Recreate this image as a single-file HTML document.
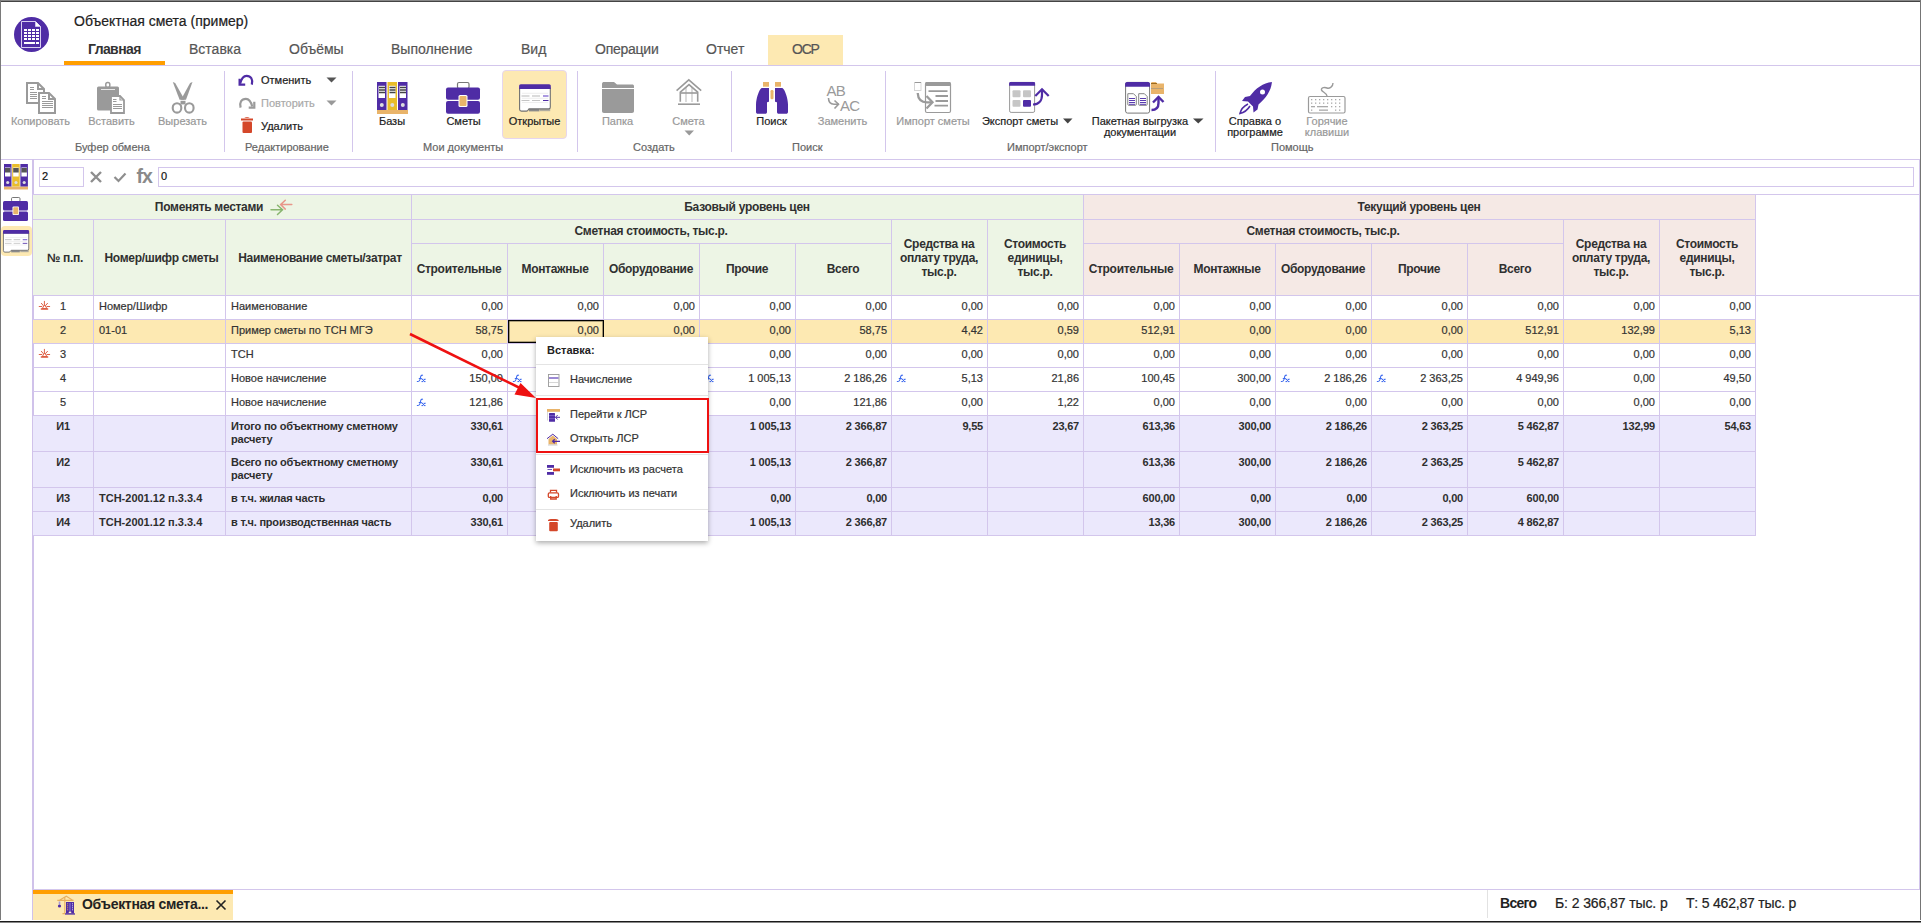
<!DOCTYPE html>
<html><head><meta charset="utf-8">
<style>
*{box-sizing:border-box;margin:0;padding:0}
html,body{width:1921px;height:923px;overflow:hidden;background:#fff}
body{position:relative;font-family:"Liberation Sans",sans-serif;color:#333;-webkit-text-stroke:0.2px currentColor}
.a{position:absolute}
.t{position:absolute;white-space:nowrap;line-height:1}
.hl{position:absolute;height:1px;background:#d3c6ec}
.vl{position:absolute;width:1px;background:#d3c6ec}
.tab{position:absolute;font-size:14px;color:#555;white-space:nowrap;line-height:1;top:42px}
.bl{position:absolute;font-size:11px;color:#222;white-space:nowrap;line-height:11px;text-align:center}
.bl.g{color:#999}
.gl{position:absolute;font-size:11px;color:#666;white-space:nowrap;line-height:1;top:142px}
.sep{position:absolute;width:1px;background:#d3c6ec;top:71px;height:81px}
.hd{position:absolute;font-weight:bold;font-size:12px;color:#303030;text-align:center;line-height:14px;display:flex;align-items:center;justify-content:center}
.c{position:absolute;font-size:11px;color:#333;white-space:nowrap;line-height:24px;height:24px}
.n{text-align:right}
.fx{position:absolute;font-family:"Liberation Serif",serif;font-style:italic;font-size:8px;color:#3a6fd8;font-weight:bold;line-height:1;letter-spacing:-0.5px}
[style*="font-weight:bold"],.hd{-webkit-text-stroke:0}
</style></head><body>
<!-- logo -->
<svg class="a" style="left:14px;top:17px" width="36" height="36" viewBox="0 0 36 36">
<circle cx="17.5" cy="17.5" r="17.5" fill="#4f2ca5"/>
<path d="M7.5 4.5 H21.5 L26.5 9.5 V30.5 H7.5 Z" fill="none" stroke="#d9cff0" stroke-width="1"/>
<path d="M21.5 4.5 V9.5 H26.5" fill="#fff" stroke="#d9cff0" stroke-width="0.8"/>
<path d="M8.5 5.5 H21 V10 H25.5 V29.5 H8.5Z" fill="#4f2ca5"/>
<g fill="#fff">
<rect x="10" y="12" width="3" height="2"/><rect x="14" y="12" width="3" height="2"/><rect x="18" y="12" width="3" height="2"/><rect x="22" y="12" width="3" height="2"/>
<rect x="10" y="15" width="3" height="2"/><rect x="14" y="15" width="3" height="2"/><rect x="18" y="15" width="3" height="2"/><rect x="22" y="15" width="3" height="2"/>
<rect x="10" y="18" width="3" height="2"/><rect x="14" y="18" width="3" height="2"/><rect x="18" y="18" width="3" height="2"/><rect x="22" y="18" width="3" height="2"/>
<rect x="10" y="21" width="3" height="2"/><rect x="14" y="21" width="3" height="2"/><rect x="18" y="21" width="3" height="2"/><rect x="22" y="21" width="3" height="2"/>
<rect x="10" y="25" width="11" height="2"/><rect x="22" y="25" width="3" height="2"/>
</g>
</svg>
<div class="t" style="left:74px;top:14px;font-size:14px;color:#222">Объектная смета (пример)</div>
<!-- tabs -->
<div class="a" style="left:768px;top:35px;width:75px;height:30px;background:#fde9b2"></div>
<div class="tab" style="left:88px;font-weight:bold;color:#333;letter-spacing:-0.6px">Главная</div>
<div class="tab" style="left:189px">Вставка</div>
<div class="tab" style="left:289px">Объёмы</div>
<div class="tab" style="left:391px">Выполнение</div>
<div class="tab" style="left:521px">Вид</div>
<div class="tab" style="left:595px;letter-spacing:-0.25px">Операции</div>
<div class="tab" style="left:706px">Отчет</div>
<div class="tab" style="left:792px;letter-spacing:-1.2px">ОСР</div>
<div class="a" style="left:64px;top:61px;width:101px;height:4px;background:#ff9e00"></div>
<div class="hl" style="left:1px;top:65px;width:1919px"></div>
<div class="hl" style="left:1px;top:159px;width:1919px"></div>
<!-- ribbon separators -->
<div class="sep" style="left:224px"></div>
<div class="sep" style="left:352px"></div>
<div class="sep" style="left:577px"></div>
<div class="sep" style="left:731px"></div>
<div class="sep" style="left:885px"></div>
<div class="sep" style="left:1215px"></div>
<!-- group labels -->
<div class="gl" style="left:75px">Буфер обмена</div>
<div class="gl" style="left:245px">Редактирование</div>
<div class="gl" style="left:423px">Мои документы</div>
<div class="gl" style="left:633px">Создать</div>
<div class="gl" style="left:792px">Поиск</div>
<div class="gl" style="left:1007px">Импорт/экспорт</div>
<div class="gl" style="left:1271px">Помощь</div>
<!-- open docs highlighted -->
<div class="a" style="left:502px;top:70px;width:65px;height:69px;background:#fde9b2;border:1px solid #e6d6ee;border-radius:4px"></div>
<!-- button labels -->
<div class="bl g" style="left:0px;top:116px;width:81px">Копировать</div>
<div class="bl g" style="left:71px;top:116px;width:81px">Вставить</div>
<div class="bl g" style="left:142px;top:116px;width:81px">Вырезать</div>
<div class="bl" style="left:352px;top:116px;width:80px">Базы</div>
<div class="bl" style="left:423px;top:116px;width:81px">Сметы</div>
<div class="bl" style="left:494px;top:116px;width:81px">Открытые</div>
<div class="bl g" style="left:577px;top:116px;width:81px">Папка</div>
<div class="bl g" style="left:648px;top:116px;width:81px">Смета</div>
<div class="bl" style="left:731px;top:116px;width:81px">Поиск</div>
<div class="bl g" style="left:802px;top:116px;width:81px">Заменить</div>
<div class="bl g" style="left:883px;top:116px;width:100px">Импорт сметы</div>
<div class="bl" style="left:975px;top:116px;width:90px">Экспорт сметы</div>
<div class="bl" style="left:1080px;top:116px;width:120px">Пакетная выгрузка<br>документации</div>
<div class="bl" style="left:1205px;top:116px;width:100px">Справка о<br>программе</div>
<div class="bl g" style="left:1277px;top:116px;width:100px">Горячие<br>клавиши</div>
<!-- small dropdown triangles -->
<svg class="a" style="left:684px;top:130px" width="11" height="6"><path d="M0.5 0.5H10L5.25 5.5Z" fill="#999"/></svg>
<svg class="a" style="left:1063px;top:118px" width="10" height="6"><path d="M0 0.5H9.5L4.75 5.5Z" fill="#444"/></svg>
<svg class="a" style="left:1193px;top:118px" width="11" height="6"><path d="M0 0.5H10.5L5.25 5.5Z" fill="#444"/></svg>
<!-- editing group -->
<div class="t" style="left:261px;top:75px;font-size:11px;color:#222">Отменить</div>
<div class="t" style="left:261px;top:98px;font-size:11px;color:#aaa">Повторить</div>
<div class="t" style="left:261px;top:121px;font-size:11px;color:#222">Удалить</div>
<svg class="a" style="left:326px;top:77px" width="11" height="6"><path d="M0.5 0.5H10.5L5.5 5.5Z" fill="#555"/></svg>
<svg class="a" style="left:326px;top:100px" width="11" height="6"><path d="M0.5 0.5H10.5L5.5 5.5Z" fill="#999"/></svg>
<svg class="a" style="left:0;top:0" width="1921" height="923" viewBox="0 0 1921 923">
<!-- copy -->
<path d="M38 103H27V83H38L44 89V92" fill="#fff" stroke="#9a9a9a" stroke-width="2"/>
<path d="M38 83V89H44" fill="none" stroke="#9a9a9a" stroke-width="2"/>
<path d="M39 93H49L55 99V113H39Z" fill="#fff" stroke="#9a9a9a" stroke-width="2"/>
<path d="M49 93V99H55" fill="none" stroke="#9a9a9a" stroke-width="2"/>
<g stroke="#9a9a9a" stroke-width="1">
<path d="M30 87.5H34M30 89.5H34M30 92.5H37M30 94.5H37M30 96.5H37M30 98.5H37"/>
<path d="M42 96.5H46M42 98.5H46M42 101.5H53M42 103.5H53M42 105.5H53M42 107.5H53"/>
</g>
<!-- paste -->
<rect x="97" y="86.5" width="22" height="24" rx="1.5" fill="#9a9a9a"/>
<rect x="105.8" y="82.5" width="4" height="5" rx="1.8" fill="none" stroke="#9a9a9a" stroke-width="1.5"/>
<rect x="101" y="87" width="14" height="3" fill="#9a9a9a"/>
<path d="M101 89.5H115" stroke="#e8e8e8" stroke-width="1"/>
<path d="M111 96H120L124 100V113H111Z" fill="#fff" stroke="#9a9a9a" stroke-width="1.8"/>
<path d="M120 96V100H124" fill="none" stroke="#9a9a9a" stroke-width="1.2"/>
<path d="M113 99.5H116.5M113 101.5H116.5M113 104.5H122M113 106.5H122M113 108.5H122" stroke="#9a9a9a" stroke-width="1"/>
<!-- scissors -->
<path d="M172.8 82L175.2 83L184.6 99.8H179.6Z" fill="#9a9a9a"/>
<path d="M192.5 82L190.1 83L180.9 99.8H186Z" fill="#9a9a9a"/>
<rect x="180.5" y="100.8" width="5" height="3.6" fill="#9a9a9a"/>
<ellipse cx="177" cy="107.9" rx="4.3" ry="4.7" fill="none" stroke="#9a9a9a" stroke-width="2.1"/>
<ellipse cx="189.3" cy="107.9" rx="4.3" ry="4.7" fill="none" stroke="#9a9a9a" stroke-width="2.1"/>
<!-- undo -->
<path d="M251.8 84.6C253.2 79.5 251 75.8 246.5 75.8C243.5 75.8 241.5 78 240.2 83.5" fill="none" stroke="#4f2ca5" stroke-width="2.2"/>
<path d="M239.6 78.8V84.6H245.2" fill="none" stroke="#4f2ca5" stroke-width="2.2"/>
<!-- redo -->
<path d="M240.6 107.6C239.2 102.5 241.4 98.8 245.9 98.8C248.9 98.8 250.9 101 252.2 106.5" fill="none" stroke="#9a9a9a" stroke-width="2.2"/>
<path d="M254.3 101.8V107.6H248.7" fill="none" stroke="#9a9a9a" stroke-width="2.2"/>
<!-- trash -->
<path d="M241 118.5H253V120.5H241Z" fill="#d4472a"/>
<path d="M244.5 118C244.5 117 249.5 117 249.5 118Z" fill="#d4472a"/>
<rect x="242.5" y="121.5" width="9.5" height="11.5" rx="1" fill="#d4472a"/>
<!-- bases -->
<rect x="377" y="110" width="31" height="4" fill="#e9b46a"/>
<rect x="377" y="82" width="9.5" height="28" fill="#4f2ca5"/>
<rect x="387.5" y="82" width="9.5" height="28" fill="#e9bd2a"/>
<rect x="398" y="82" width="9.5" height="28" fill="#4f2ca5"/>
<g fill="#fff"><rect x="378.5" y="85.8" width="6.5" height="12.2"/><rect x="389" y="85.8" width="6.5" height="12.2"/><rect x="399.5" y="85.8" width="6.5" height="12.2"/></g>
<g stroke="#444" stroke-width="1.7"><path d="M379 87.5H385M379 90H385M379 92.5H385M389.5 87.5H395.5M389.5 90H395.5M389.5 92.5H395.5M400 87.5H406M400 90H406M400 92.5H406"/></g>
<g fill="#ddd"><circle cx="381.8" cy="105" r="2"/><circle cx="392.3" cy="105" r="2"/><circle cx="402.8" cy="105" r="2"/></g>
<!-- briefcase -->
<rect x="457.5" y="82.5" width="11.5" height="6" rx="1.5" fill="none" stroke="#777" stroke-width="1.2"/>
<rect x="446" y="87.5" width="34" height="12.3" rx="2" fill="#4f2ca5"/>
<rect x="446" y="101" width="34" height="12.7" rx="2" fill="#4f2ca5"/>
<rect x="458.5" y="95" width="9" height="12" rx="1.5" fill="#fff"/>
<rect x="459.5" y="96" width="7" height="10" rx="1" fill="#e9b46a"/>
<!-- open docs -->
<path d="M529 108.6H539.5V111.4H529Z" fill="#8a8a8a"/>
<path d="M540 108.6H550.2V111.2H540Z" fill="#b0aca0"/>
<path d="M519.6 88V109.3C519.6 110.5 520.3 111.1 521.4 111.1H526.5C527.5 111.1 528 110.5 528.5 109.5L529 108.9H548.6C549.7 108.9 550.3 108.3 550.3 107.2V88Z" fill="#fff" stroke="#707070" stroke-width="1.1"/>
<path d="M519.1 88.9V86C519.1 85 519.8 84.3 520.8 84.3H549.1C550.1 84.3 550.8 85 550.8 86V88.9Z" fill="#4f2ca5"/>
<path d="M522 93.3H548M522 98.3H548M522 102.5H548" stroke="#e6e6e6" stroke-width="0.7"/>
<path d="M521.5 96H529.5M532 96H540" stroke="#cfcfcf" stroke-width="1.5"/>
<path d="M543 96H548.5" stroke="#8f78d6" stroke-width="1.5"/>
<path d="M521.5 100.5H529.5M532 100.5H540" stroke="#bdbdbd" stroke-width="0.9"/>
<path d="M543 100.5H548.5" stroke="#4f2ca5" stroke-width="1"/>
<!-- folder -->
<path d="M602 84C602 82.5 603 82 604 82H614L617 84.5H632C633.5 84.5 634 85 634 86.5V111C634 112.3 633.3 113 632 113H604C602.7 113 602 112.3 602 111Z" fill="#9a9a9a"/>
<path d="M602 88.5H634" stroke="#fff" stroke-width="1"/>
<!-- house -->
<path d="M686 87V102M692 87V102" stroke="#cdcdcd" stroke-width="1.4"/>
<g fill="none" stroke="#9a9a9a" stroke-width="1.6">
<path d="M676.6 90.6L688.8 79.9L701.2 90.6"/>
<path d="M680.3 101.8V92.2L689 84.6L697.7 92.2V101.8"/>
<path d="M680.3 93H697.7"/>
</g>
<path d="M678 104.2H700" stroke="#9a9a9a" stroke-width="1.6"/>
<!-- binoculars -->
<rect x="763" y="82" width="6" height="4.7" fill="#e9b46a"/>
<rect x="775" y="82" width="6" height="4.7" fill="#e9b46a"/>
<path d="M762.3 88H769V101C769 101.6 768.6 102 768 102C767.4 102 767 102.4 767 103V112C767 113 766.3 113.8 765.3 113.8H757.8C756.8 113.8 756 113 756 112V104.5C756.3 98 758.5 92 760.2 89.5C760.6 88.6 761.4 88 762.3 88Z" fill="#4f2ca5"/>
<path d="M781.7 88H775V101C775 101.6 775.4 102 776 102C776.6 102 777 102.4 777 103V112C777 113 777.7 113.8 778.7 113.8H786.2C787.2 113.8 788 113 788 112V104.5C787.7 98 785.5 92 783.8 89.5C783.4 88.6 782.6 88 781.7 88Z" fill="#4f2ca5"/>
<rect x="770.5" y="90" width="3" height="9.3" rx="1.2" fill="#e9b46a"/>
<!-- AB AC -->
<text x="826.5" y="95.9" font-family="Liberation Sans" font-size="15" fill="#9a9a9a" letter-spacing="-0.8">AB</text>
<text x="840" y="110.7" font-family="Liberation Sans" font-size="15" fill="#9a9a9a" letter-spacing="-0.8">AC</text>
<path d="M828.5 98C828.5 102 830.5 104.2 834 104.2H839" fill="none" stroke="#9a9a9a" stroke-width="1.6"/>
<path d="M834.5 100.5L838.5 104.2L834.5 108.5" fill="none" stroke="#9a9a9a" stroke-width="1.6"/>
<!-- import -->
<rect x="914.5" y="82.5" width="6.5" height="8" fill="#fff" stroke="#ccc" stroke-width="0.8"/>
<rect x="915" y="82" width="6" height="1" fill="#999"/>
<rect x="925.5" y="82.5" width="25" height="30" rx="1.5" fill="#fff" stroke="#9a9a9a" stroke-width="1.2"/>
<rect x="925.5" y="82" width="25" height="4" rx="1" fill="#9a9a9a"/>
<path d="M928.5 91.2H947.5M935.5 96H948M935.5 101H948M934.5 105.6H948" stroke="#9a9a9a" stroke-width="1.8"/>
<path d="M917.7 93C918 99 921 102.3 927 102.3H932" fill="none" stroke="#9a9a9a" stroke-width="2.3"/>
<path d="M926.5 96L932.5 102.3L926.5 108.5" fill="none" stroke="#9a9a9a" stroke-width="2.3"/>
<!-- export -->
<rect x="1009.6" y="82.4" width="25" height="30" rx="1.5" fill="#fff" stroke="#999" stroke-width="1"/>
<path d="M1009.1 85.8V83.5C1009.1 82.5 1009.6 82 1010.6 82H1033.8C1034.8 82 1035.1 82.5 1035.1 83.5V85.8Z" fill="#4f2ca5"/>
<g fill="#c6c6c6"><rect x="1012.5" y="90.2" width="8" height="7" rx="1"/><rect x="1023" y="90.2" width="8" height="7" rx="1"/><rect x="1012.5" y="100" width="8" height="6.8" rx="1"/></g>
<rect x="1023" y="100" width="8" height="6.8" rx="1" fill="#4f2ca5"/>
<path d="M1033 104.5C1038.5 104.5 1042 101 1042 95V89" fill="none" stroke="#4f2ca5" stroke-width="2.2"/>
<path d="M1035.3 96L1042 89.2L1048.7 96" fill="none" stroke="#4f2ca5" stroke-width="2.2"/>
<!-- packet -->
<rect x="1125.6" y="82.4" width="24" height="30.7" rx="2" fill="#fff" stroke="#777" stroke-width="1"/>
<path d="M1125.1 86.8V84C1125.1 82.7 1126 82 1127.2 82H1148C1149.2 82 1150 82.7 1150 84V86.8Z" fill="#4f2ca5"/>
<g fill="#fff" stroke="#777" stroke-width="0.9"><path d="M1127.8 93.7H1133.5L1136.3 96.5V104.3C1136.3 105 1136 105.3 1135.3 105.3H1128.8C1128.1 105.3 1127.8 105 1127.8 104.3Z"/><path d="M1138.7 93.7H1144.4L1147.2 96.5V104.3C1147.2 105 1146.9 105.3 1146.2 105.3H1139.7C1139 105.3 1138.7 105 1138.7 104.3Z"/></g>
<g stroke="#5a3cb0" stroke-width="1"><path d="M1129 98.5H1135M1129 100.5H1135M1129 102.5H1135M1129 104.3H1135M1140 98.5H1146M1140 100.5H1146M1140 102.5H1146M1140 104.3H1146"/></g>
<path d="M1151 83.5C1151 82.5 1151.5 82 1152.5 82H1156L1157 83.5H1164V94H1151Z" fill="#e9b46a"/>
<path d="M1151 83.5H1157" stroke="#9b6a20" stroke-width="1"/>
<path d="M1151.5 88.5H1163.5" stroke="#888" stroke-width="1" stroke-dasharray="1 1"/>
<path d="M1151.5 110C1156 110 1158.5 108 1158.5 103V97.5" fill="none" stroke="#4f2ca5" stroke-width="2.4"/>
<path d="M1153 102.5L1158.5 97L1163.5 102" fill="none" stroke="#4f2ca5" stroke-width="2.4"/>
<!-- rocket -->
<path d="M1272 82C1263 83 1256 88 1250 96L1245 97L1242 101L1248 101.5L1253 106.5L1253.5 112.5L1257.5 109.5L1258.5 104.5C1266 98 1271 91 1272 82Z" fill="#4f2ca5"/>
<circle cx="1262.5" cy="92" r="2.5" fill="#fff"/>
<path d="M1248 104C1244 106 1241 109 1240 113.5C1244.5 112.5 1247.5 110 1250 106" fill="none" stroke="#4f2ca5" stroke-width="1.6"/>
<!-- keyboard -->
<rect x="1308.5" y="96.5" width="36.5" height="16.5" rx="1.5" fill="#fff" stroke="#9a9a9a" stroke-width="1.2"/>
<path d="M1327 96C1327 93 1322 92 1321.5 90C1321 87.5 1325 87 1327 88C1329 89 1333 87 1333 83" fill="none" stroke="#9a9a9a" stroke-width="1.4"/>
<g fill="#aaa">
<rect x="1311" y="99" width="1.3" height="1.3"/><rect x="1315" y="99" width="1.3" height="1.3"/><rect x="1319" y="99" width="1.3" height="1.3"/><rect x="1323" y="99" width="1.3" height="1.3"/><rect x="1327" y="99" width="1.3" height="1.3"/><rect x="1331" y="99" width="1.3" height="1.3"/><rect x="1335" y="99" width="1.3" height="1.3"/><rect x="1339" y="99" width="1.3" height="1.3"/>
<rect x="1311" y="102.5" width="1.3" height="1.3"/><rect x="1315" y="102.5" width="1.3" height="1.3"/><rect x="1319" y="102.5" width="1.3" height="1.3"/><rect x="1323" y="102.5" width="1.3" height="1.3"/><rect x="1327" y="102.5" width="1.3" height="1.3"/><rect x="1331" y="102.5" width="1.3" height="1.3"/><rect x="1335" y="102.5" width="1.3" height="1.3"/><rect x="1339" y="102.5" width="1.3" height="1.3"/>
<rect x="1311" y="106" width="4" height="1.3"/><rect x="1317" y="106" width="11" height="1.3"/><rect x="1331" y="106" width="1.3" height="1.3"/><rect x="1335" y="106" width="1.3" height="1.3"/><rect x="1339" y="106" width="1.3" height="1.3"/>
<rect x="1311" y="109.5" width="1.3" height="1.3"/><rect x="1319" y="109.5" width="9" height="1.3"/><rect x="1335" y="109.5" width="1.3" height="1.3"/><rect x="1339" y="109.5" width="1.3" height="1.3"/>
</g>
</svg>
<!-- left sidebar line -->
<div class="a" style="left:32px;top:159px;width:2px;height:761px;background:#d0c2ea"></div>
<div class="hl" style="left:32px;top:194px;width:1888px"></div>
<!-- formula inputs -->
<div class="a" style="left:39px;top:167px;width:45px;height:20px;border:1px solid #d3c6ec"></div>
<div class="t" style="left:42px;top:171px;font-size:11px;color:#111">2</div>
<div class="a" style="left:158px;top:167px;width:1756px;height:20px;border:1px solid #d3c6ec"></div>
<div class="t" style="left:161px;top:171px;font-size:11px;color:#111">0</div>
<svg class="a" style="left:0;top:0" width="200" height="260">
<path d="M91 172L101 182M101 172L91 182" stroke="#8e8e8e" stroke-width="2.4"/>
<path d="M114.5 177L118.5 181L125.5 173.5" fill="none" stroke="#8e8e8e" stroke-width="2.2"/>
<!-- sidebar bases -->
<rect x="4" y="186.5" width="24" height="3" fill="#e9b46a"/>
<rect x="4" y="164" width="7.5" height="22.5" fill="#4f2ca5"/>
<rect x="12.2" y="164" width="7.5" height="22.5" fill="#e9bd2a"/>
<rect x="20.4" y="164" width="7.5" height="22.5" fill="#4f2ca5"/>
<g fill="#fff"><rect x="5" y="167.5" width="5.5" height="9"/><rect x="13.2" y="167.5" width="5.5" height="9"/><rect x="21.4" y="167.5" width="5.5" height="9"/></g>
<g fill="#555"><rect x="5" y="168" width="5.5" height="4.5"/><rect x="13.2" y="168" width="5.5" height="4.5"/><rect x="21.4" y="168" width="5.5" height="4.5"/></g>
<g fill="#ddd"><circle cx="7.7" cy="182.5" r="1.6"/><circle cx="16" cy="182.5" r="1.6"/><circle cx="24.2" cy="182.5" r="1.6"/></g>
<!-- sidebar briefcase -->
<rect x="11.5" y="197.5" width="8.5" height="4" rx="1.2" fill="none" stroke="#777" stroke-width="1"/>
<rect x="3" y="201" width="25" height="9.6" rx="1.5" fill="#4f2ca5"/>
<rect x="3" y="211.4" width="25" height="9.6" rx="1.5" fill="#4f2ca5"/>
<rect x="12.5" y="206.5" width="6.5" height="8.5" rx="1" fill="#fff"/>
<rect x="13.3" y="207.3" width="5" height="7" rx="0.8" fill="#e9b46a"/>
</svg>
<div class="a" style="left:1px;top:226px;width:31px;height:30px;background:#fde9b2;border-radius:4px"></div>
<svg class="a" style="left:0;top:0" width="40" height="260"><g transform="translate(3,230) scale(0.825) translate(-519.1,-84.3)">
<path d="M529 108.6H539.5V111.4H529Z" fill="#8a8a8a"/>
<path d="M540 108.6H550.2V111.2H540Z" fill="#b0aca0"/>
<path d="M519.6 88V109.3C519.6 110.5 520.3 111.1 521.4 111.1H526.5C527.5 111.1 528 110.5 528.5 109.5L529 108.9H548.6C549.7 108.9 550.3 108.3 550.3 107.2V88Z" fill="#fff" stroke="#707070" stroke-width="1.1"/>
<path d="M519.1 88.9V86C519.1 85 519.8 84.3 520.8 84.3H549.1C550.1 84.3 550.8 85 550.8 86V88.9Z" fill="#4f2ca5"/>
<path d="M522 93.3H548M522 98.3H548M522 102.5H548" stroke="#e6e6e6" stroke-width="0.7"/>
<path d="M521.5 96H529.5M532 96H540" stroke="#cfcfcf" stroke-width="1.5"/>
<path d="M543 96H548.5" stroke="#8f78d6" stroke-width="1.5"/>
<path d="M521.5 100.5H529.5M532 100.5H540" stroke="#bdbdbd" stroke-width="0.9"/>
<path d="M543 100.5H548.5" stroke="#4f2ca5" stroke-width="1"/>
</g></svg>
<div class="t" style="left:136.5px;top:166.5px;font-size:19.5px;font-weight:bold;color:#8a8a8a;letter-spacing:-1px">fx</div>
<div class="a" style="left:33px;top:195px;width:1050px;height:100px;background:#edf5e5"></div>
<div class="a" style="left:1083px;top:195px;width:672px;height:100px;background:#f5e9e5"></div>
<div class="a" style="left:33px;top:320px;width:1722px;height:23px;background:#fde9b2"></div>
<div class="a" style="left:33px;top:416px;width:1722px;height:35px;background:#ebe8fc"></div>
<div class="a" style="left:33px;top:452px;width:1722px;height:35px;background:#ebe8fc"></div>
<div class="a" style="left:33px;top:488px;width:1722px;height:23px;background:#ebe8fc"></div>
<div class="a" style="left:33px;top:512px;width:1722px;height:23px;background:#ebe8fc"></div>
<div class="hl" style="left:33px;top:219px;width:1723px"></div>
<div class="hl" style="left:411px;top:243px;width:481px"></div>
<div class="hl" style="left:1083px;top:243px;width:481px"></div>
<div class="hl" style="left:33px;top:295px;width:1887px"></div>
<div class="hl" style="left:33px;top:319px;width:1723px"></div>
<div class="hl" style="left:33px;top:343px;width:1723px"></div>
<div class="hl" style="left:33px;top:367px;width:1723px"></div>
<div class="hl" style="left:33px;top:391px;width:1723px"></div>
<div class="hl" style="left:33px;top:415px;width:1723px"></div>
<div class="hl" style="left:33px;top:451px;width:1723px"></div>
<div class="hl" style="left:33px;top:487px;width:1723px"></div>
<div class="hl" style="left:33px;top:511px;width:1723px"></div>
<div class="hl" style="left:33px;top:535px;width:1723px"></div>
<div class="vl" style="left:411px;top:195px;height:25px"></div>
<div class="vl" style="left:1083px;top:195px;height:25px"></div>
<div class="vl" style="left:1755px;top:195px;height:25px"></div>
<div class="vl" style="left:93px;top:219px;height:77px"></div>
<div class="vl" style="left:225px;top:219px;height:77px"></div>
<div class="vl" style="left:411px;top:219px;height:77px"></div>
<div class="vl" style="left:891px;top:219px;height:77px"></div>
<div class="vl" style="left:987px;top:219px;height:77px"></div>
<div class="vl" style="left:1083px;top:219px;height:77px"></div>
<div class="vl" style="left:1563px;top:219px;height:77px"></div>
<div class="vl" style="left:1659px;top:219px;height:77px"></div>
<div class="vl" style="left:1755px;top:219px;height:77px"></div>
<div class="vl" style="left:507px;top:243px;height:53px"></div>
<div class="vl" style="left:603px;top:243px;height:53px"></div>
<div class="vl" style="left:699px;top:243px;height:53px"></div>
<div class="vl" style="left:795px;top:243px;height:53px"></div>
<div class="vl" style="left:1179px;top:243px;height:53px"></div>
<div class="vl" style="left:1275px;top:243px;height:53px"></div>
<div class="vl" style="left:1371px;top:243px;height:53px"></div>
<div class="vl" style="left:1467px;top:243px;height:53px"></div>
<div class="vl" style="left:93px;top:295px;height:241px"></div>
<div class="vl" style="left:225px;top:295px;height:241px"></div>
<div class="vl" style="left:411px;top:295px;height:241px"></div>
<div class="vl" style="left:507px;top:295px;height:241px"></div>
<div class="vl" style="left:603px;top:295px;height:241px"></div>
<div class="vl" style="left:699px;top:295px;height:241px"></div>
<div class="vl" style="left:795px;top:295px;height:241px"></div>
<div class="vl" style="left:891px;top:295px;height:241px"></div>
<div class="vl" style="left:987px;top:295px;height:241px"></div>
<div class="vl" style="left:1083px;top:295px;height:241px"></div>
<div class="vl" style="left:1179px;top:295px;height:241px"></div>
<div class="vl" style="left:1275px;top:295px;height:241px"></div>
<div class="vl" style="left:1371px;top:295px;height:241px"></div>
<div class="vl" style="left:1467px;top:295px;height:241px"></div>
<div class="vl" style="left:1563px;top:295px;height:241px"></div>
<div class="vl" style="left:1659px;top:295px;height:241px"></div>
<div class="vl" style="left:1755px;top:295px;height:241px"></div>
<div class="hd" style="left:33px;top:195px;width:378px;height:24px;letter-spacing:-0.3px;">Поменять местами<span style="display:inline-block;width:26px"></span></div>
<svg class="a" style="left:262px;top:196px" width="38" height="22"><g fill="none" stroke-width="1.5" stroke-linecap="round"><path d="M9 13.8H20.5M15.5 9.3L20.5 13.8L15.5 18.5" stroke="#88b56e"/><path d="M29.8 8.6H18.6M23.3 4.2L18.6 8.6L23.3 13.1" stroke="#e8978a"/></g></svg>
<div class="hd" style="left:411px;top:195px;width:672px;height:24px;letter-spacing:-0.3px;">Базовый уровень цен</div>
<div class="hd" style="left:1083px;top:195px;width:672px;height:24px;letter-spacing:-0.3px;">Текущий уровень цен</div>
<div class="hd" style="left:33px;top:220px;width:60px;height:76px;letter-spacing:-0.3px;padding-left:4px">№ п.п.</div>
<div class="hd" style="left:93px;top:220px;width:132px;height:76px;letter-spacing:-0.3px;padding-left:5px">Номер/шифр сметы</div>
<div class="hd" style="left:225px;top:220px;width:186px;height:76px;letter-spacing:-0.3px;padding-left:4px">Наименование сметы/затрат</div>
<div class="hd" style="left:411px;top:219px;width:480px;height:24px;letter-spacing:-0.3px;">Сметная стоимость, тыс.р.</div>
<div class="hd" style="left:411px;top:243px;width:96px;height:52px;letter-spacing:-0.3px;">Строительные</div>
<div class="hd" style="left:507px;top:243px;width:96px;height:52px;letter-spacing:-0.3px;">Монтажные</div>
<div class="hd" style="left:603px;top:243px;width:96px;height:52px;letter-spacing:-0.3px;">Оборудование</div>
<div class="hd" style="left:699px;top:243px;width:96px;height:52px;letter-spacing:-0.3px;">Прочие</div>
<div class="hd" style="left:795px;top:243px;width:96px;height:52px;letter-spacing:-0.3px;">Всего</div>
<div class="hd" style="left:891px;top:220px;width:96px;height:76px;letter-spacing:-0.3px;">Средства на<br>оплату труда,<br>тыс.р.</div>
<div class="hd" style="left:987px;top:220px;width:96px;height:76px;letter-spacing:-0.3px;">Стоимость<br>единицы,<br>тыс.р.</div>
<div class="hd" style="left:1083px;top:219px;width:480px;height:24px;letter-spacing:-0.3px;">Сметная стоимость, тыс.р.</div>
<div class="hd" style="left:1083px;top:243px;width:96px;height:52px;letter-spacing:-0.3px;">Строительные</div>
<div class="hd" style="left:1179px;top:243px;width:96px;height:52px;letter-spacing:-0.3px;">Монтажные</div>
<div class="hd" style="left:1275px;top:243px;width:96px;height:52px;letter-spacing:-0.3px;">Оборудование</div>
<div class="hd" style="left:1371px;top:243px;width:96px;height:52px;letter-spacing:-0.3px;">Прочие</div>
<div class="hd" style="left:1467px;top:243px;width:96px;height:52px;letter-spacing:-0.3px;">Всего</div>
<div class="hd" style="left:1563px;top:220px;width:96px;height:76px;letter-spacing:-0.3px;">Средства на<br>оплату труда,<br>тыс.р.</div>
<div class="hd" style="left:1659px;top:220px;width:96px;height:76px;letter-spacing:-0.3px;">Стоимость<br>единицы,<br>тыс.р.</div>
<div class="t" style="left:33px;top:301px;width:60px;text-align:center;font-size:11px;">1</div>
<svg class="a" style="left:38px;top:296px" width="14" height="16" viewBox="0 0 14 16"><g stroke="#dc5a3e" stroke-width="0.95" fill="none" stroke-linecap="round"><path d="M6.4 5.3V9M3.4 7.3L5.2 9.5M9.5 7.3L7.6 9.5M1.2 10.5H3.8M11.7 10.5H9"/><path d="M6.4 9.2L4.2 12.6H8.6Z"/><path d="M3.3 13H9.7" stroke-width="1.3"/></g></svg>
<div class="t" style="left:99px;top:301px;font-size:11px;;letter-spacing:0">Номер/Шифр</div>
<div class="t" style="left:231px;top:300px;font-size:11px;line-height:13px;">Наименование</div>
<div class="t" style="left:411px;top:301px;width:92px;text-align:right;font-size:11px;">0,00</div>
<div class="t" style="left:507px;top:301px;width:92px;text-align:right;font-size:11px;">0,00</div>
<div class="t" style="left:603px;top:301px;width:92px;text-align:right;font-size:11px;">0,00</div>
<div class="t" style="left:699px;top:301px;width:92px;text-align:right;font-size:11px;">0,00</div>
<div class="t" style="left:795px;top:301px;width:92px;text-align:right;font-size:11px;">0,00</div>
<div class="t" style="left:891px;top:301px;width:92px;text-align:right;font-size:11px;">0,00</div>
<div class="t" style="left:987px;top:301px;width:92px;text-align:right;font-size:11px;">0,00</div>
<div class="t" style="left:1083px;top:301px;width:92px;text-align:right;font-size:11px;">0,00</div>
<div class="t" style="left:1179px;top:301px;width:92px;text-align:right;font-size:11px;">0,00</div>
<div class="t" style="left:1275px;top:301px;width:92px;text-align:right;font-size:11px;">0,00</div>
<div class="t" style="left:1371px;top:301px;width:92px;text-align:right;font-size:11px;">0,00</div>
<div class="t" style="left:1467px;top:301px;width:92px;text-align:right;font-size:11px;">0,00</div>
<div class="t" style="left:1563px;top:301px;width:92px;text-align:right;font-size:11px;">0,00</div>
<div class="t" style="left:1659px;top:301px;width:92px;text-align:right;font-size:11px;">0,00</div>
<div class="t" style="left:33px;top:325px;width:60px;text-align:center;font-size:11px;">2</div>
<div class="t" style="left:99px;top:325px;font-size:11px;;letter-spacing:0">01-01</div>
<div class="t" style="left:231px;top:324px;font-size:11px;line-height:13px;">Пример сметы по ТСН МГЭ</div>
<div class="t" style="left:411px;top:325px;width:92px;text-align:right;font-size:11px;">58,75</div>
<div class="t" style="left:507px;top:325px;width:92px;text-align:right;font-size:11px;">0,00</div>
<div class="t" style="left:603px;top:325px;width:92px;text-align:right;font-size:11px;">0,00</div>
<div class="t" style="left:699px;top:325px;width:92px;text-align:right;font-size:11px;">0,00</div>
<div class="t" style="left:795px;top:325px;width:92px;text-align:right;font-size:11px;">58,75</div>
<div class="t" style="left:891px;top:325px;width:92px;text-align:right;font-size:11px;">4,42</div>
<div class="t" style="left:987px;top:325px;width:92px;text-align:right;font-size:11px;">0,59</div>
<div class="t" style="left:1083px;top:325px;width:92px;text-align:right;font-size:11px;">512,91</div>
<div class="t" style="left:1179px;top:325px;width:92px;text-align:right;font-size:11px;">0,00</div>
<div class="t" style="left:1275px;top:325px;width:92px;text-align:right;font-size:11px;">0,00</div>
<div class="t" style="left:1371px;top:325px;width:92px;text-align:right;font-size:11px;">0,00</div>
<div class="t" style="left:1467px;top:325px;width:92px;text-align:right;font-size:11px;">512,91</div>
<div class="t" style="left:1563px;top:325px;width:92px;text-align:right;font-size:11px;">132,99</div>
<div class="t" style="left:1659px;top:325px;width:92px;text-align:right;font-size:11px;">5,13</div>
<div class="t" style="left:33px;top:349px;width:60px;text-align:center;font-size:11px;">3</div>
<svg class="a" style="left:38px;top:344px" width="14" height="16" viewBox="0 0 14 16"><g stroke="#dc5a3e" stroke-width="0.95" fill="none" stroke-linecap="round"><path d="M6.4 5.3V9M3.4 7.3L5.2 9.5M9.5 7.3L7.6 9.5M1.2 10.5H3.8M11.7 10.5H9"/><path d="M6.4 9.2L4.2 12.6H8.6Z"/><path d="M3.3 13H9.7" stroke-width="1.3"/></g></svg>
<div class="t" style="left:231px;top:348px;font-size:11px;line-height:13px;">ТСН</div>
<div class="t" style="left:411px;top:349px;width:92px;text-align:right;font-size:11px;">0,00</div>
<div class="t" style="left:507px;top:349px;width:92px;text-align:right;font-size:11px;">0,00</div>
<div class="t" style="left:603px;top:349px;width:92px;text-align:right;font-size:11px;">0,00</div>
<div class="t" style="left:699px;top:349px;width:92px;text-align:right;font-size:11px;">0,00</div>
<div class="t" style="left:795px;top:349px;width:92px;text-align:right;font-size:11px;">0,00</div>
<div class="t" style="left:891px;top:349px;width:92px;text-align:right;font-size:11px;">0,00</div>
<div class="t" style="left:987px;top:349px;width:92px;text-align:right;font-size:11px;">0,00</div>
<div class="t" style="left:1083px;top:349px;width:92px;text-align:right;font-size:11px;">0,00</div>
<div class="t" style="left:1179px;top:349px;width:92px;text-align:right;font-size:11px;">0,00</div>
<div class="t" style="left:1275px;top:349px;width:92px;text-align:right;font-size:11px;">0,00</div>
<div class="t" style="left:1371px;top:349px;width:92px;text-align:right;font-size:11px;">0,00</div>
<div class="t" style="left:1467px;top:349px;width:92px;text-align:right;font-size:11px;">0,00</div>
<div class="t" style="left:1563px;top:349px;width:92px;text-align:right;font-size:11px;">0,00</div>
<div class="t" style="left:1659px;top:349px;width:92px;text-align:right;font-size:11px;">0,00</div>
<div class="t" style="left:33px;top:373px;width:60px;text-align:center;font-size:11px;">4</div>
<div class="t" style="left:231px;top:372px;font-size:11px;line-height:13px;">Новое начисление</div>
<svg class="a" style="left:416px;top:374px" width="11" height="9" viewBox="0 0 11 9"><g fill="none" stroke="#3b68ee" stroke-width="1.1" stroke-linecap="round"><path d="M1.3 7.5C3 7.8 3.6 7.3 4 5.5L4.6 2.8C4.9 1.5 5.4 1 6.6 1.2M3.2 4.5H5.4"/><path d="M6.4 5.3L8.6 7.6M8.8 5.3L6.3 7.6M6 5.3H7M8.3 5.3H9.3M5.8 7.6H6.8M8.2 7.6H9.2" stroke-width="0.9"/></g></svg>
<div class="t" style="left:411px;top:373px;width:92px;text-align:right;font-size:11px;">150,00</div>
<svg class="a" style="left:512px;top:374px" width="11" height="9" viewBox="0 0 11 9"><g fill="none" stroke="#3b68ee" stroke-width="1.1" stroke-linecap="round"><path d="M1.3 7.5C3 7.8 3.6 7.3 4 5.5L4.6 2.8C4.9 1.5 5.4 1 6.6 1.2M3.2 4.5H5.4"/><path d="M6.4 5.3L8.6 7.6M8.8 5.3L6.3 7.6M6 5.3H7M8.3 5.3H9.3M5.8 7.6H6.8M8.2 7.6H9.2" stroke-width="0.9"/></g></svg>
<div class="t" style="left:507px;top:373px;width:92px;text-align:right;font-size:11px;">150,00</div>
<div class="t" style="left:603px;top:373px;width:92px;text-align:right;font-size:11px;">0,00</div>
<svg class="a" style="left:704px;top:374px" width="11" height="9" viewBox="0 0 11 9"><g fill="none" stroke="#3b68ee" stroke-width="1.1" stroke-linecap="round"><path d="M1.3 7.5C3 7.8 3.6 7.3 4 5.5L4.6 2.8C4.9 1.5 5.4 1 6.6 1.2M3.2 4.5H5.4"/><path d="M6.4 5.3L8.6 7.6M8.8 5.3L6.3 7.6M6 5.3H7M8.3 5.3H9.3M5.8 7.6H6.8M8.2 7.6H9.2" stroke-width="0.9"/></g></svg>
<div class="t" style="left:699px;top:373px;width:92px;text-align:right;font-size:11px;">1 005,13</div>
<div class="t" style="left:795px;top:373px;width:92px;text-align:right;font-size:11px;">2 186,26</div>
<svg class="a" style="left:896px;top:374px" width="11" height="9" viewBox="0 0 11 9"><g fill="none" stroke="#3b68ee" stroke-width="1.1" stroke-linecap="round"><path d="M1.3 7.5C3 7.8 3.6 7.3 4 5.5L4.6 2.8C4.9 1.5 5.4 1 6.6 1.2M3.2 4.5H5.4"/><path d="M6.4 5.3L8.6 7.6M8.8 5.3L6.3 7.6M6 5.3H7M8.3 5.3H9.3M5.8 7.6H6.8M8.2 7.6H9.2" stroke-width="0.9"/></g></svg>
<div class="t" style="left:891px;top:373px;width:92px;text-align:right;font-size:11px;">5,13</div>
<div class="t" style="left:987px;top:373px;width:92px;text-align:right;font-size:11px;">21,86</div>
<div class="t" style="left:1083px;top:373px;width:92px;text-align:right;font-size:11px;">100,45</div>
<div class="t" style="left:1179px;top:373px;width:92px;text-align:right;font-size:11px;">300,00</div>
<svg class="a" style="left:1280px;top:374px" width="11" height="9" viewBox="0 0 11 9"><g fill="none" stroke="#3b68ee" stroke-width="1.1" stroke-linecap="round"><path d="M1.3 7.5C3 7.8 3.6 7.3 4 5.5L4.6 2.8C4.9 1.5 5.4 1 6.6 1.2M3.2 4.5H5.4"/><path d="M6.4 5.3L8.6 7.6M8.8 5.3L6.3 7.6M6 5.3H7M8.3 5.3H9.3M5.8 7.6H6.8M8.2 7.6H9.2" stroke-width="0.9"/></g></svg>
<div class="t" style="left:1275px;top:373px;width:92px;text-align:right;font-size:11px;">2 186,26</div>
<svg class="a" style="left:1376px;top:374px" width="11" height="9" viewBox="0 0 11 9"><g fill="none" stroke="#3b68ee" stroke-width="1.1" stroke-linecap="round"><path d="M1.3 7.5C3 7.8 3.6 7.3 4 5.5L4.6 2.8C4.9 1.5 5.4 1 6.6 1.2M3.2 4.5H5.4"/><path d="M6.4 5.3L8.6 7.6M8.8 5.3L6.3 7.6M6 5.3H7M8.3 5.3H9.3M5.8 7.6H6.8M8.2 7.6H9.2" stroke-width="0.9"/></g></svg>
<div class="t" style="left:1371px;top:373px;width:92px;text-align:right;font-size:11px;">2 363,25</div>
<div class="t" style="left:1467px;top:373px;width:92px;text-align:right;font-size:11px;">4 949,96</div>
<div class="t" style="left:1563px;top:373px;width:92px;text-align:right;font-size:11px;">0,00</div>
<div class="t" style="left:1659px;top:373px;width:92px;text-align:right;font-size:11px;">49,50</div>
<div class="t" style="left:33px;top:397px;width:60px;text-align:center;font-size:11px;">5</div>
<div class="t" style="left:231px;top:396px;font-size:11px;line-height:13px;">Новое начисление</div>
<svg class="a" style="left:416px;top:398px" width="11" height="9" viewBox="0 0 11 9"><g fill="none" stroke="#3b68ee" stroke-width="1.1" stroke-linecap="round"><path d="M1.3 7.5C3 7.8 3.6 7.3 4 5.5L4.6 2.8C4.9 1.5 5.4 1 6.6 1.2M3.2 4.5H5.4"/><path d="M6.4 5.3L8.6 7.6M8.8 5.3L6.3 7.6M6 5.3H7M8.3 5.3H9.3M5.8 7.6H6.8M8.2 7.6H9.2" stroke-width="0.9"/></g></svg>
<div class="t" style="left:411px;top:397px;width:92px;text-align:right;font-size:11px;">121,86</div>
<div class="t" style="left:507px;top:397px;width:92px;text-align:right;font-size:11px;">0,00</div>
<div class="t" style="left:603px;top:397px;width:92px;text-align:right;font-size:11px;">0,00</div>
<div class="t" style="left:699px;top:397px;width:92px;text-align:right;font-size:11px;">0,00</div>
<div class="t" style="left:795px;top:397px;width:92px;text-align:right;font-size:11px;">121,86</div>
<div class="t" style="left:891px;top:397px;width:92px;text-align:right;font-size:11px;">0,00</div>
<div class="t" style="left:987px;top:397px;width:92px;text-align:right;font-size:11px;">1,22</div>
<div class="t" style="left:1083px;top:397px;width:92px;text-align:right;font-size:11px;">0,00</div>
<div class="t" style="left:1179px;top:397px;width:92px;text-align:right;font-size:11px;">0,00</div>
<div class="t" style="left:1275px;top:397px;width:92px;text-align:right;font-size:11px;">0,00</div>
<div class="t" style="left:1371px;top:397px;width:92px;text-align:right;font-size:11px;">0,00</div>
<div class="t" style="left:1467px;top:397px;width:92px;text-align:right;font-size:11px;">0,00</div>
<div class="t" style="left:1563px;top:397px;width:92px;text-align:right;font-size:11px;">0,00</div>
<div class="t" style="left:1659px;top:397px;width:92px;text-align:right;font-size:11px;">0,00</div>
<div class="t" style="left:33px;top:421px;width:60px;text-align:center;font-size:11px;font-weight:bold;color:#2e2e2e;letter-spacing:-0.2px;">И1</div>
<div class="t" style="left:231px;top:420px;font-size:11px;line-height:13px;font-weight:bold;color:#2e2e2e;letter-spacing:-0.2px;">Итого по объектному сметному<br>расчету</div>
<div class="t" style="left:411px;top:421px;width:92px;text-align:right;font-size:11px;font-weight:bold;color:#2e2e2e;letter-spacing:-0.2px;">330,61</div>
<div class="t" style="left:507px;top:421px;width:92px;text-align:right;font-size:11px;font-weight:bold;color:#2e2e2e;letter-spacing:-0.2px;">0,00</div>
<div class="t" style="left:603px;top:421px;width:92px;text-align:right;font-size:11px;font-weight:bold;color:#2e2e2e;letter-spacing:-0.2px;">0,00</div>
<div class="t" style="left:699px;top:421px;width:92px;text-align:right;font-size:11px;font-weight:bold;color:#2e2e2e;letter-spacing:-0.2px;">1 005,13</div>
<div class="t" style="left:795px;top:421px;width:92px;text-align:right;font-size:11px;font-weight:bold;color:#2e2e2e;letter-spacing:-0.2px;">2 366,87</div>
<div class="t" style="left:891px;top:421px;width:92px;text-align:right;font-size:11px;font-weight:bold;color:#2e2e2e;letter-spacing:-0.2px;">9,55</div>
<div class="t" style="left:987px;top:421px;width:92px;text-align:right;font-size:11px;font-weight:bold;color:#2e2e2e;letter-spacing:-0.2px;">23,67</div>
<div class="t" style="left:1083px;top:421px;width:92px;text-align:right;font-size:11px;font-weight:bold;color:#2e2e2e;letter-spacing:-0.2px;">613,36</div>
<div class="t" style="left:1179px;top:421px;width:92px;text-align:right;font-size:11px;font-weight:bold;color:#2e2e2e;letter-spacing:-0.2px;">300,00</div>
<div class="t" style="left:1275px;top:421px;width:92px;text-align:right;font-size:11px;font-weight:bold;color:#2e2e2e;letter-spacing:-0.2px;">2 186,26</div>
<div class="t" style="left:1371px;top:421px;width:92px;text-align:right;font-size:11px;font-weight:bold;color:#2e2e2e;letter-spacing:-0.2px;">2 363,25</div>
<div class="t" style="left:1467px;top:421px;width:92px;text-align:right;font-size:11px;font-weight:bold;color:#2e2e2e;letter-spacing:-0.2px;">5 462,87</div>
<div class="t" style="left:1563px;top:421px;width:92px;text-align:right;font-size:11px;font-weight:bold;color:#2e2e2e;letter-spacing:-0.2px;">132,99</div>
<div class="t" style="left:1659px;top:421px;width:92px;text-align:right;font-size:11px;font-weight:bold;color:#2e2e2e;letter-spacing:-0.2px;">54,63</div>
<div class="t" style="left:33px;top:457px;width:60px;text-align:center;font-size:11px;font-weight:bold;color:#2e2e2e;letter-spacing:-0.2px;">И2</div>
<div class="t" style="left:231px;top:456px;font-size:11px;line-height:13px;font-weight:bold;color:#2e2e2e;letter-spacing:-0.2px;">Всего по объектному сметному<br>расчету</div>
<div class="t" style="left:411px;top:457px;width:92px;text-align:right;font-size:11px;font-weight:bold;color:#2e2e2e;letter-spacing:-0.2px;">330,61</div>
<div class="t" style="left:507px;top:457px;width:92px;text-align:right;font-size:11px;font-weight:bold;color:#2e2e2e;letter-spacing:-0.2px;">0,00</div>
<div class="t" style="left:603px;top:457px;width:92px;text-align:right;font-size:11px;font-weight:bold;color:#2e2e2e;letter-spacing:-0.2px;">0,00</div>
<div class="t" style="left:699px;top:457px;width:92px;text-align:right;font-size:11px;font-weight:bold;color:#2e2e2e;letter-spacing:-0.2px;">1 005,13</div>
<div class="t" style="left:795px;top:457px;width:92px;text-align:right;font-size:11px;font-weight:bold;color:#2e2e2e;letter-spacing:-0.2px;">2 366,87</div>
<div class="t" style="left:1083px;top:457px;width:92px;text-align:right;font-size:11px;font-weight:bold;color:#2e2e2e;letter-spacing:-0.2px;">613,36</div>
<div class="t" style="left:1179px;top:457px;width:92px;text-align:right;font-size:11px;font-weight:bold;color:#2e2e2e;letter-spacing:-0.2px;">300,00</div>
<div class="t" style="left:1275px;top:457px;width:92px;text-align:right;font-size:11px;font-weight:bold;color:#2e2e2e;letter-spacing:-0.2px;">2 186,26</div>
<div class="t" style="left:1371px;top:457px;width:92px;text-align:right;font-size:11px;font-weight:bold;color:#2e2e2e;letter-spacing:-0.2px;">2 363,25</div>
<div class="t" style="left:1467px;top:457px;width:92px;text-align:right;font-size:11px;font-weight:bold;color:#2e2e2e;letter-spacing:-0.2px;">5 462,87</div>
<div class="t" style="left:33px;top:493px;width:60px;text-align:center;font-size:11px;font-weight:bold;color:#2e2e2e;letter-spacing:-0.2px;">И3</div>
<div class="t" style="left:99px;top:493px;font-size:11px;font-weight:bold;color:#2e2e2e;letter-spacing:-0.2px;;letter-spacing:0">ТСН-2001.12 п.3.3.4</div>
<div class="t" style="left:231px;top:492px;font-size:11px;line-height:13px;font-weight:bold;color:#2e2e2e;letter-spacing:-0.2px;">в т.ч. жилая часть</div>
<div class="t" style="left:411px;top:493px;width:92px;text-align:right;font-size:11px;font-weight:bold;color:#2e2e2e;letter-spacing:-0.2px;">0,00</div>
<div class="t" style="left:507px;top:493px;width:92px;text-align:right;font-size:11px;font-weight:bold;color:#2e2e2e;letter-spacing:-0.2px;">0,00</div>
<div class="t" style="left:603px;top:493px;width:92px;text-align:right;font-size:11px;font-weight:bold;color:#2e2e2e;letter-spacing:-0.2px;">0,00</div>
<div class="t" style="left:699px;top:493px;width:92px;text-align:right;font-size:11px;font-weight:bold;color:#2e2e2e;letter-spacing:-0.2px;">0,00</div>
<div class="t" style="left:795px;top:493px;width:92px;text-align:right;font-size:11px;font-weight:bold;color:#2e2e2e;letter-spacing:-0.2px;">0,00</div>
<div class="t" style="left:1083px;top:493px;width:92px;text-align:right;font-size:11px;font-weight:bold;color:#2e2e2e;letter-spacing:-0.2px;">600,00</div>
<div class="t" style="left:1179px;top:493px;width:92px;text-align:right;font-size:11px;font-weight:bold;color:#2e2e2e;letter-spacing:-0.2px;">0,00</div>
<div class="t" style="left:1275px;top:493px;width:92px;text-align:right;font-size:11px;font-weight:bold;color:#2e2e2e;letter-spacing:-0.2px;">0,00</div>
<div class="t" style="left:1371px;top:493px;width:92px;text-align:right;font-size:11px;font-weight:bold;color:#2e2e2e;letter-spacing:-0.2px;">0,00</div>
<div class="t" style="left:1467px;top:493px;width:92px;text-align:right;font-size:11px;font-weight:bold;color:#2e2e2e;letter-spacing:-0.2px;">600,00</div>
<div class="t" style="left:33px;top:517px;width:60px;text-align:center;font-size:11px;font-weight:bold;color:#2e2e2e;letter-spacing:-0.2px;">И4</div>
<div class="t" style="left:99px;top:517px;font-size:11px;font-weight:bold;color:#2e2e2e;letter-spacing:-0.2px;;letter-spacing:0">ТСН-2001.12 п.3.3.4</div>
<div class="t" style="left:231px;top:516px;font-size:11px;line-height:13px;font-weight:bold;color:#2e2e2e;letter-spacing:-0.2px;">в т.ч. производственная часть</div>
<div class="t" style="left:411px;top:517px;width:92px;text-align:right;font-size:11px;font-weight:bold;color:#2e2e2e;letter-spacing:-0.2px;">330,61</div>
<div class="t" style="left:507px;top:517px;width:92px;text-align:right;font-size:11px;font-weight:bold;color:#2e2e2e;letter-spacing:-0.2px;">0,00</div>
<div class="t" style="left:603px;top:517px;width:92px;text-align:right;font-size:11px;font-weight:bold;color:#2e2e2e;letter-spacing:-0.2px;">0,00</div>
<div class="t" style="left:699px;top:517px;width:92px;text-align:right;font-size:11px;font-weight:bold;color:#2e2e2e;letter-spacing:-0.2px;">1 005,13</div>
<div class="t" style="left:795px;top:517px;width:92px;text-align:right;font-size:11px;font-weight:bold;color:#2e2e2e;letter-spacing:-0.2px;">2 366,87</div>
<div class="t" style="left:1083px;top:517px;width:92px;text-align:right;font-size:11px;font-weight:bold;color:#2e2e2e;letter-spacing:-0.2px;">13,36</div>
<div class="t" style="left:1179px;top:517px;width:92px;text-align:right;font-size:11px;font-weight:bold;color:#2e2e2e;letter-spacing:-0.2px;">300,00</div>
<div class="t" style="left:1275px;top:517px;width:92px;text-align:right;font-size:11px;font-weight:bold;color:#2e2e2e;letter-spacing:-0.2px;">2 186,26</div>
<div class="t" style="left:1371px;top:517px;width:92px;text-align:right;font-size:11px;font-weight:bold;color:#2e2e2e;letter-spacing:-0.2px;">2 363,25</div>
<div class="t" style="left:1467px;top:517px;width:92px;text-align:right;font-size:11px;font-weight:bold;color:#2e2e2e;letter-spacing:-0.2px;">4 862,87</div>
<div class="a" style="left:508px;top:320px;width:96px;height:23px;border:1px solid #000"></div><div class="a" style="left:508px;top:320px;width:96px;height:23px;box-shadow:inset 0 0 0 1.6px rgba(0,0,0,0.6)"></div><!-- context menu -->
<div class="a" style="left:536px;top:337px;width:172px;height:204px;background:#fff;box-shadow:0 2px 5px rgba(0,0,0,0.33)"></div>
<div class="t" style="left:547px;top:345px;font-size:11px;font-weight:bold;color:#222">Вставка:</div>
<div class="a" style="left:536px;top:364px;width:172px;height:1px;background:#e4e4e4"></div>
<div class="t" style="left:570px;top:374px;font-size:11px;color:#333">Начисление</div>
<div class="a" style="left:536px;top:395px;width:172px;height:1px;background:#e4e4e4"></div>
<div class="t" style="left:570px;top:409px;font-size:11px;color:#333">Перейти к ЛСР</div>
<div class="t" style="left:570px;top:433px;font-size:11px;color:#333">Открыть ЛСР</div>
<div class="a" style="left:536px;top:454px;width:172px;height:1px;background:#e4e4e4"></div>
<div class="t" style="left:570px;top:464px;font-size:11px;color:#333">Исключить из расчета</div>
<div class="t" style="left:570px;top:488px;font-size:11px;color:#333">Исключить из печати</div>
<div class="a" style="left:536px;top:509px;width:172px;height:1px;background:#e4e4e4"></div>
<div class="t" style="left:570px;top:518px;font-size:11px;color:#333">Удалить</div>
<div class="a" style="left:536px;top:398px;width:173px;height:55px;border:2px solid #ee1111"></div>
<svg class="a" style="left:0;top:0" width="720" height="560">
<!-- nacislenie icon -->
<rect x="548.5" y="374.5" width="10.5" height="12" fill="#fff" stroke="#999" stroke-width="0.9"/>
<path d="M549 378H558.5" stroke="#5a3cb8" stroke-width="1.2"/>
<path d="M549 382.5H558.5" stroke="#ccc" stroke-width="0.8"/>
<!-- goto lsr -->
<rect x="547" y="409" width="13" height="2.8" fill="#e9b46a"/>
<path d="M547.5 412V420.5" stroke="#ccc" stroke-width="0.8"/>
<rect x="549" y="413" width="6" height="8.8" rx="0.5" fill="#4f2ca5"/>
<path d="M549 415.6H555M549 418.7H555" stroke="#8d76d0" stroke-width="0.7"/>
<path d="M560 417.3H555.5M557.6 415.1L555.5 417.3L557.6 419.5" fill="none" stroke="#4f2ca5" stroke-width="1"/>
<!-- open lsr -->
<path d="M548.5 439L552.8 435.5L557 439V444.5H548.5Z" fill="#e9b46a"/>
<path d="M547 438.7L552.8 434.2L558.2 438.7" fill="none" stroke="#4f2ca5" stroke-width="1"/>
<path d="M560 441.3H552.8M554.7 439.3L552.6 441.3L554.7 443.3" fill="none" stroke="#4f2ca5" stroke-width="1.2"/>
<path d="M548 445H557.5" stroke="#ccc" stroke-width="1"/>
<!-- exclude calc -->
<rect x="547" y="465" width="7" height="2.8" fill="#4f2ca5"/>
<rect x="547" y="472" width="7" height="2.8" fill="#4f2ca5"/>
<rect x="553" y="468.5" width="7" height="2.8" fill="#d4472a"/>
<path d="M547.5 469.5H552" stroke="#4f2ca5" stroke-width="0.8"/>
<!-- exclude print -->
<g fill="none" stroke="#d4472a" stroke-width="1.3">
<path d="M550.5 492.5V490.3H556.5V492.5"/>
<rect x="548.3" y="492.8" width="10.2" height="4.6" rx="1.2"/>
<path d="M550.7 496V499H556.2V496"/>
</g>
<!-- delete -->
<path d="M548 520.3C548 519.5 550 519 553.3 519C556.6 519 558.6 519.5 558.6 520.3V521H548Z" fill="#d4472a"/>
<rect x="549.2" y="522" width="8.6" height="9.2" rx="1" fill="#d4472a"/>
<!-- red arrow -->
<path d="M410 334L524 390" stroke="#ee1111" stroke-width="2.6"/>
<path d="M536 398L514.5 394.5L520.5 383Z" fill="#ee1111"/>
</svg>
<!-- bottom tab -->
<div class="hl" style="left:32px;top:889px;width:1888px"></div>
<div class="a" style="left:33px;top:890px;width:200px;height:4px;background:#ff9e00"></div>
<div class="a" style="left:33px;top:894px;width:200px;height:26px;background:#fde9b2"></div>
<div class="t" style="left:82px;top:897px;font-size:14px;font-weight:bold;color:#222;letter-spacing:-0.3px">Объектная смета...</div>
<svg class="a" style="left:0;top:880px" width="240" height="40">
<path d="M216.5 20.5L225.5 29.5M225.5 20.5L216.5 29.5" stroke="#222" stroke-width="1.6"/>
<g fill="none" stroke="#e6b060" stroke-width="1.1">
<path d="M57.3 20.4H73.6M59 20.4L66.3 16.2L73 20.4M64.8 17.5V33.5M62.5 33.6H65"/>
</g>
<path d="M59.5 21.5V24.5" stroke="#a79ad8" stroke-width="1.6"/>
<circle cx="59.5" cy="26" r="1.6" fill="#4f2ca5"/>
<rect x="66" y="22" width="8" height="11.5" fill="#4f2ca5"/>
<g fill="#e6b060"><rect x="67.2" y="23.3" width="1" height="1"/><rect x="67.2" y="25.3" width="1" height="1"/><rect x="67.2" y="27.3" width="1" height="1"/><rect x="67.2" y="29.3" width="1" height="1"/></g>
<g fill="#d8d0f4"><rect x="72" y="23.3" width="1" height="1"/><rect x="72" y="25.3" width="1" height="1"/><rect x="72" y="27.3" width="1" height="1"/><rect x="72" y="29.3" width="1" height="1"/></g>
<path d="M69 24H71M69 26H71M69 28H71M69 30H71" stroke="#9a88d8" stroke-width="0.9"/>
<rect x="68.7" y="31.6" width="2.6" height="1.6" rx="0.8" fill="#fff3c8"/>
<rect x="65" y="33.3" width="10" height="1.3" fill="#4f2ca5"/>
</svg>
<!-- status -->
<div class="a" style="left:1487px;top:890px;width:1px;height:28px;background:#e2e2e2"></div>
<div class="t" style="left:1500px;top:896px;font-size:14px;font-weight:bold;color:#222;letter-spacing:-0.7px">Всего</div>
<div class="t" style="left:1555px;top:896px;font-size:14px;color:#222;letter-spacing:-0.1px">Б: 2 366,87 тыс. р</div>
<div class="t" style="left:1686px;top:896px;font-size:14px;color:#222;letter-spacing:-0.2px">Т: 5 462,87 тыс. р</div>
<div class="a" style="left:1919px;top:159px;width:1px;height:731px;background:#d3c6ec"></div>
<!-- window borders -->
<div class="a" style="left:0;top:0;width:1921px;height:1px;background:#888"></div>
<div class="a" style="left:0;top:1px;width:1921px;height:1px;background:#444"></div>
<div class="a" style="left:0;top:0;width:1px;height:923px;background:#7a7a7a"></div>
<div class="a" style="left:1920px;top:0;width:1px;height:923px;background:#757575"></div>
<div class="a" style="left:0;top:920px;width:1921px;height:1px;background:#fff"></div>
<div class="a" style="left:0;top:921px;width:1921px;height:1px;background:#1a1a1a"></div>
<div class="a" style="left:0;top:922px;width:1921px;height:1px;background:#888"></div>
</body></html>
